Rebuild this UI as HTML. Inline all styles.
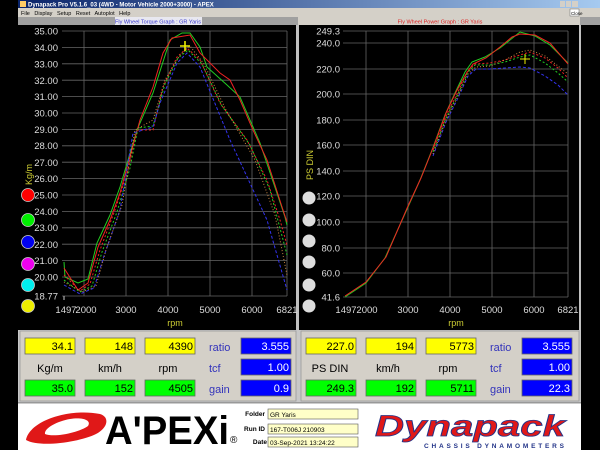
<!DOCTYPE html>
<html><head><meta charset="utf-8"><style>
html,body{margin:0;padding:0;background:#000;}
svg{display:block}
text{font-family:"Liberation Sans",Arial,sans-serif}
</style></head><body>
<svg width="600" height="450" viewBox="0 0 600 450" xmlns="http://www.w3.org/2000/svg">
<rect width="600" height="450" fill="#000"/>
<defs><linearGradient id="tb" x1="0" x2="1"><stop offset="0" stop-color="#0a246a"/><stop offset="1" stop-color="#a6caf0"/></linearGradient></defs>
<rect x="18" y="0" width="582" height="8" fill="url(#tb)"/>
<text x="28" y="6.5" font-size="6" fill="#fff" font-weight="bold">Dynapack Pro V5.1.6_03 (4WD - Motor Vehicle 2000+3000) - APEX</text>
<rect x="20" y="1" width="6" height="6" fill="#fc6"/>
<rect x="560" y="1" width="5" height="6" fill="#d4d0c8"/><rect x="566" y="1" width="5" height="6" fill="#d4d0c8"/><rect x="572" y="1" width="6" height="6" fill="#d4d0c8"/>
<rect x="18" y="8" width="582" height="9" fill="#d4d0c8"/>
<text x="21" y="15" font-size="5.5" fill="#000" word-spacing="3">File Display Setup Reset Autoplot Help</text>
<rect x="570" y="9" width="9" height="7" fill="#fff" stroke="#666" stroke-width=".5"/>
<text x="571" y="15" font-size="4.5" fill="#000">Close</text>
<rect x="18" y="17" width="582" height="8" fill="#a0a0a0"/>
<rect x="115" y="17" width="87" height="8" fill="#e8e8f0"/>
<text x="158" y="23.5" font-size="5.5" fill="#3333cc" text-anchor="middle">Fly Wheel Torque Graph : GR Yaris</text>
<rect x="298" y="17" width="282" height="8" fill="#d4d0c8"/>
<text x="440" y="23.5" font-size="5.5" fill="#dd2222" text-anchor="middle">Fly Wheel Power Graph : GR Yaris</text>
<rect x="18" y="25" width="279" height="305" fill="#000"/>
<rect x="296" y="25" width="3" height="305" fill="#c0c0c0"/>
<rect x="299" y="25" width="280" height="305" fill="#000"/>
<rect x="579" y="25" width="2" height="305" fill="#c0c0c0"/>
<g stroke="#666" stroke-width="0.8">
<line x1="84" y1="31" x2="84" y2="296"/><line x1="126" y1="31" x2="126" y2="296"/><line x1="168" y1="31" x2="168" y2="296"/><line x1="210" y1="31" x2="210" y2="296"/><line x1="252" y1="31" x2="252" y2="296"/><line x1="287" y1="31" x2="287" y2="296"/>
<line x1="62" y1="31" x2="287" y2="31"/><line x1="62" y1="47.4" x2="287" y2="47.4"/><line x1="62" y1="63.8" x2="287" y2="63.8"/><line x1="62" y1="80.2" x2="287" y2="80.2"/><line x1="62" y1="96.6" x2="287" y2="96.6"/><line x1="62" y1="113" x2="287" y2="113"/><line x1="62" y1="129.4" x2="287" y2="129.4"/><line x1="62" y1="145.8" x2="287" y2="145.8"/><line x1="62" y1="162.2" x2="287" y2="162.2"/><line x1="62" y1="178.6" x2="287" y2="178.6"/><line x1="62" y1="195" x2="287" y2="195"/><line x1="62" y1="211.4" x2="287" y2="211.4"/><line x1="62" y1="227.8" x2="287" y2="227.8"/><line x1="62" y1="244.2" x2="287" y2="244.2"/><line x1="62" y1="260.6" x2="287" y2="260.6"/><line x1="62" y1="277" x2="287" y2="277"/><line x1="62" y1="296" x2="287" y2="296"/>
</g>
<line x1="64" y1="296" x2="64" y2="300" stroke="#ccc"/>
<g font-size="9.5" fill="#ddd" text-anchor="end">
<text x="58" y="34.5">35.00</text><text x="58" y="51">34.00</text><text x="58" y="67.5">33.00</text><text x="58" y="84">32.00</text><text x="58" y="100">31.00</text><text x="58" y="116.5">30.00</text><text x="58" y="133">29.00</text><text x="58" y="149">28.00</text><text x="58" y="166">27.00</text><text x="58" y="182">26.00</text><text x="58" y="198.5">25.00</text><text x="58" y="215">24.00</text><text x="58" y="231">23.00</text><text x="58" y="248">22.00</text><text x="58" y="264">21.00</text><text x="58" y="280.5">20.00</text><text x="58" y="299.5">18.77</text>
</g>
<g font-size="9.5" fill="#ddd" text-anchor="middle">
<text x="66" y="313">1497</text><text x="86" y="313">2000</text><text x="126" y="313">3000</text><text x="168" y="313">4000</text><text x="210" y="313">5000</text><text x="252" y="313">6000</text><text x="287" y="313">6821</text>
</g>
<text x="175" y="326" font-size="9" fill="#cccc33" text-anchor="middle">rpm</text>
<text x="0" y="0" font-size="9" fill="#cccc33" transform="translate(32,185) rotate(-90)">Kg/m</text>
<g stroke="#ccc" stroke-width="0.8">
<circle cx="28" cy="195" r="6.5" fill="#f00"/><circle cx="28" cy="220" r="6.5" fill="#0e0"/><circle cx="28" cy="242" r="6.5" fill="#00e"/><circle cx="28" cy="264" r="6.5" fill="#e0e"/><circle cx="28" cy="285" r="6.5" fill="#0ee"/><circle cx="28" cy="306" r="6.5" fill="#ee0"/>
</g>
<g fill="none" stroke-width="1">
<path stroke="#2c2" d="M64,262 L65,277 L78,283 L88,279 L97,243 L110,215 L120,187 L137,130 L153,93 L170,40 L182,33 L190,33 L200,47 L207,67 L227,85 L240,97 L260,143 L285,217 L287,225"/>
<path stroke="#e22" d="M64,268 L78,290 L88,283 L98,247 L110,220 L120,193 L140,120 L153,87 L163,53 L172,38 L190,35 L200,53 L220,73 L230,80 L240,100 L253,130 L267,160 L283,210 L287,222"/>
<path stroke="#e22" stroke-dasharray="2,2" d="M64,275 L80,291 L90,284 L100,250 L115,210 L128,170 L137,130 L153,130 L163,87 L177,57 L187,48 L200,60 L220,103 L247,140 L267,180 L280,220 L287,245"/>
<path stroke="#2c2" stroke-dasharray="2,2" d="M64,280 L80,292 L92,286 L102,252 L117,212 L130,168 L138,128 L153,126 L165,84 L178,58 L188,50 L202,64 L222,106 L250,145 L270,190 L287,255"/>
<path stroke="#33e" stroke-dasharray="3,2" d="M64,285 L80,294 L94,288 L104,256 L120,210 L133,133 L153,127 L160,103 L177,63 L187,53 L200,67 L230,140 L267,220 L287,290"/>
<path stroke="#c84" stroke-dasharray="1,2" d="M64,282 L82,292 L96,286 L106,250 L122,205 L135,130 L153,120 L165,80 L180,55 L190,46 L204,64 L226,110 L255,160 L275,215 L287,275"/>
</g>
<path d="M180,46 h10 M185,41 v10" stroke="#ee0" stroke-width="1.6"/>
<g stroke="#666" stroke-width="0.8">
<line x1="366" y1="31" x2="366" y2="297"/><line x1="408" y1="31" x2="408" y2="297"/><line x1="450" y1="31" x2="450" y2="297"/><line x1="492" y1="31" x2="492" y2="297"/><line x1="534" y1="31" x2="534" y2="297"/><line x1="568" y1="31" x2="568" y2="297"/>
<line x1="343" y1="31" x2="568" y2="31"/><line x1="343" y1="43" x2="568" y2="43"/><line x1="343" y1="69" x2="568" y2="69"/><line x1="343" y1="94" x2="568" y2="94"/><line x1="343" y1="120" x2="568" y2="120"/><line x1="343" y1="145" x2="568" y2="145"/><line x1="343" y1="171" x2="568" y2="171"/><line x1="343" y1="196" x2="568" y2="196"/><line x1="343" y1="222" x2="568" y2="222"/><line x1="343" y1="248" x2="568" y2="248"/><line x1="343" y1="273" x2="568" y2="273"/><line x1="343" y1="297" x2="568" y2="297"/>
</g>
<g font-size="9.5" fill="#ddd" text-anchor="end">
<text x="340" y="34.5">249.3</text><text x="340" y="46.5">240.0</text><text x="340" y="72.5">220.0</text><text x="340" y="97.5">200.0</text><text x="340" y="123.5">180.0</text><text x="340" y="148.5">160.0</text><text x="340" y="174.5">140.0</text><text x="340" y="199.5">120.0</text><text x="340" y="225.5">100.0</text><text x="340" y="251.5">80.0</text><text x="340" y="276.5">60.0</text><text x="340" y="300.5">41.6</text>
</g>
<g font-size="9.5" fill="#ddd" text-anchor="middle">
<text x="346" y="313">1497</text><text x="367" y="313">2000</text><text x="408" y="313">3000</text><text x="450" y="313">4000</text><text x="492" y="313">5000</text><text x="534" y="313">6000</text><text x="568" y="313">6821</text>
</g>
<text x="456" y="326" font-size="9" fill="#cccc33" text-anchor="middle">rpm</text>
<text x="0" y="0" font-size="9" fill="#cccc33" transform="translate(313,180) rotate(-90)">PS DIN</text>
<g fill="#ddd">
<circle cx="309" cy="198" r="6.5"/><circle cx="309" cy="220" r="6.5"/><circle cx="309" cy="241" r="6.5"/><circle cx="309" cy="262" r="6.5"/><circle cx="309" cy="285" r="6.5"/><circle cx="309" cy="306" r="6.5"/>
</g>
<g fill="none" stroke-width="1">
<path stroke="#2c2" d="M345,297 L366,283 L385,258 L408,207 L420,180 L432,150 L445,115 L455,93 L465,72 L472,62 L485,57 L500,48 L510,40 L520,32 L535,36 L550,45 L568,63"/>
<path stroke="#e22" d="M345,296 L366,282 L386,257 L408,206 L421,178 L433,148 L446,113 L456,92 L466,74 L473,64 L486,58 L500,47 L512,37 L520,34 L535,35 L550,43 L568,64"/>
<path stroke="#e22" stroke-dasharray="2,2" d="M433,150 L446,116 L458,92 L468,70 L475,64 L490,63 L505,60 L520,55 L530,52 L545,58 L558,68 L568,78"/>
<path stroke="#2c2" stroke-dasharray="2,2" d="M433,152 L446,118 L458,94 L468,72 L475,65 L490,65 L505,62 L520,57 L530,55 L545,63 L558,73 L568,82"/>
<path stroke="#33e" stroke-dasharray="3,2" d="M433,156 L446,122 L458,98 L468,76 L476,69 L490,69 L505,68 L520,67 L530,68 L545,76 L558,85 L568,95"/>
<path stroke="#c84" stroke-dasharray="1,2" d="M433,154 L446,120 L458,96 L468,74 L476,67 L490,66 L505,60 L520,52 L530,50 L545,56 L558,66 L568,74"/>
</g>
<path d="M520,59 h10 M525,54 v10" stroke="#ee0" stroke-width="1"/>
<rect x="18" y="330" width="563" height="72" fill="#c8c8c8"/>
<rect x="20" y="331" width="276" height="70" fill="#d4d0c8" stroke="#999" stroke-width=".8"/>
<rect x="301" y="331" width="278" height="70" fill="#d4d0c8" stroke="#999" stroke-width=".8"/>
<g stroke="#666" stroke-width=".8">
<rect x="25" y="338" width="50" height="16" fill="#ff0"/><rect x="85" y="338" width="50" height="16" fill="#ff0"/><rect x="145" y="338" width="50" height="16" fill="#ff0"/>
<rect x="25" y="380" width="50" height="16" fill="#0f0"/><rect x="85" y="380" width="50" height="16" fill="#0f0"/><rect x="145" y="380" width="50" height="16" fill="#0f0"/>
<rect x="241" y="338" width="50" height="16" fill="#00f"/><rect x="241" y="359" width="50" height="16" fill="#00f"/><rect x="241" y="380" width="50" height="16" fill="#00f"/>
<rect x="306" y="338" width="50" height="16" fill="#ff0"/><rect x="366" y="338" width="50" height="16" fill="#ff0"/><rect x="426" y="338" width="50" height="16" fill="#ff0"/>
<rect x="306" y="380" width="50" height="16" fill="#0f0"/><rect x="366" y="380" width="50" height="16" fill="#0f0"/><rect x="426" y="380" width="50" height="16" fill="#0f0"/>
<rect x="522" y="338" width="50" height="16" fill="#00f"/><rect x="522" y="359" width="50" height="16" fill="#00f"/><rect x="522" y="380" width="50" height="16" fill="#00f"/>
</g>
<g font-size="11" text-anchor="end" fill="#000">
<text x="73" y="350">34.1</text><text x="133" y="350">148</text><text x="193" y="350">4390</text>
<text x="73" y="392">35.0</text><text x="133" y="392">152</text><text x="193" y="392">4505</text>
<text x="354" y="350">227.0</text><text x="414" y="350">194</text><text x="474" y="350">5773</text>
<text x="354" y="392">249.3</text><text x="414" y="392">192</text><text x="474" y="392">5711</text>
</g>
<g font-size="11" text-anchor="end" fill="#fff">
<text x="289" y="350">3.555</text><text x="289" y="371">1.00</text><text x="289" y="392">0.9</text>
<text x="570" y="350">3.555</text><text x="570" y="371">1.00</text><text x="570" y="392">22.3</text>
</g>
<g font-size="11" text-anchor="middle" fill="#000">
<text x="50" y="372">Kg/m</text><text x="110" y="372">km/h</text><text x="168" y="372">rpm</text>
<text x="330" y="372">PS DIN</text><text x="388" y="372">km/h</text><text x="448" y="372">rpm</text>
</g>
<g font-size="11" fill="#3333bb">
<text x="209" y="351">ratio</text><text x="209" y="372">tcf</text><text x="209" y="393">gain</text>
<text x="490" y="351">ratio</text><text x="490" y="372">tcf</text><text x="490" y="393">gain</text>
</g>
<rect x="18" y="402" width="563" height="48" fill="#fff"/>
<rect x="18" y="402" width="563" height="1.5" fill="#999"/>
<path d="M26,440 C30,420 70,408 100,414 C110,417 108,428 96,434 C80,442 40,448 26,440 Z M45,434 C55,438 80,432 88,426 C92,420 82,417 70,419 C58,421 44,428 45,434 Z" fill="#e01818" fill-rule="evenodd"/>
<text x="105" y="444" font-family="Liberation Serif,serif" font-weight="bold" font-size="40" fill="#000" textLength="124" lengthAdjust="spacingAndGlyphs">A'PEXi</text>
<text x="230" y="443" font-size="10" fill="#000">®</text>
<g font-size="6.5" font-weight="bold" fill="#000" text-anchor="end">
<text x="265" y="416">Folder</text><text x="265" y="431">Run ID</text><text x="267" y="444">Date</text>
</g>
<g stroke="#555" stroke-width=".6" fill="#ffffc8">
<rect x="268" y="409" width="90" height="10"/><rect x="268" y="424" width="90" height="10"/><rect x="268" y="437" width="90" height="10"/>
</g>
<g font-size="6.5" fill="#000">
<text x="270" y="417">GR Yaris</text><text x="270" y="432">167-T006J 210903</text><text x="270" y="445">03-Sep-2021  13:24:22</text>
</g>
<text x="375" y="436" font-family="Liberation Serif,serif" font-style="italic" font-weight="bold" font-size="30" fill="#e01818" stroke="#223388" stroke-width=".8" textLength="190" lengthAdjust="spacingAndGlyphs">Dynapack</text>
<text x="424" y="448" font-size="6.5" font-weight="bold" fill="#223388" textLength="140">CHASSIS  DYNAMOMETERS</text>
</svg>
</body></html>
